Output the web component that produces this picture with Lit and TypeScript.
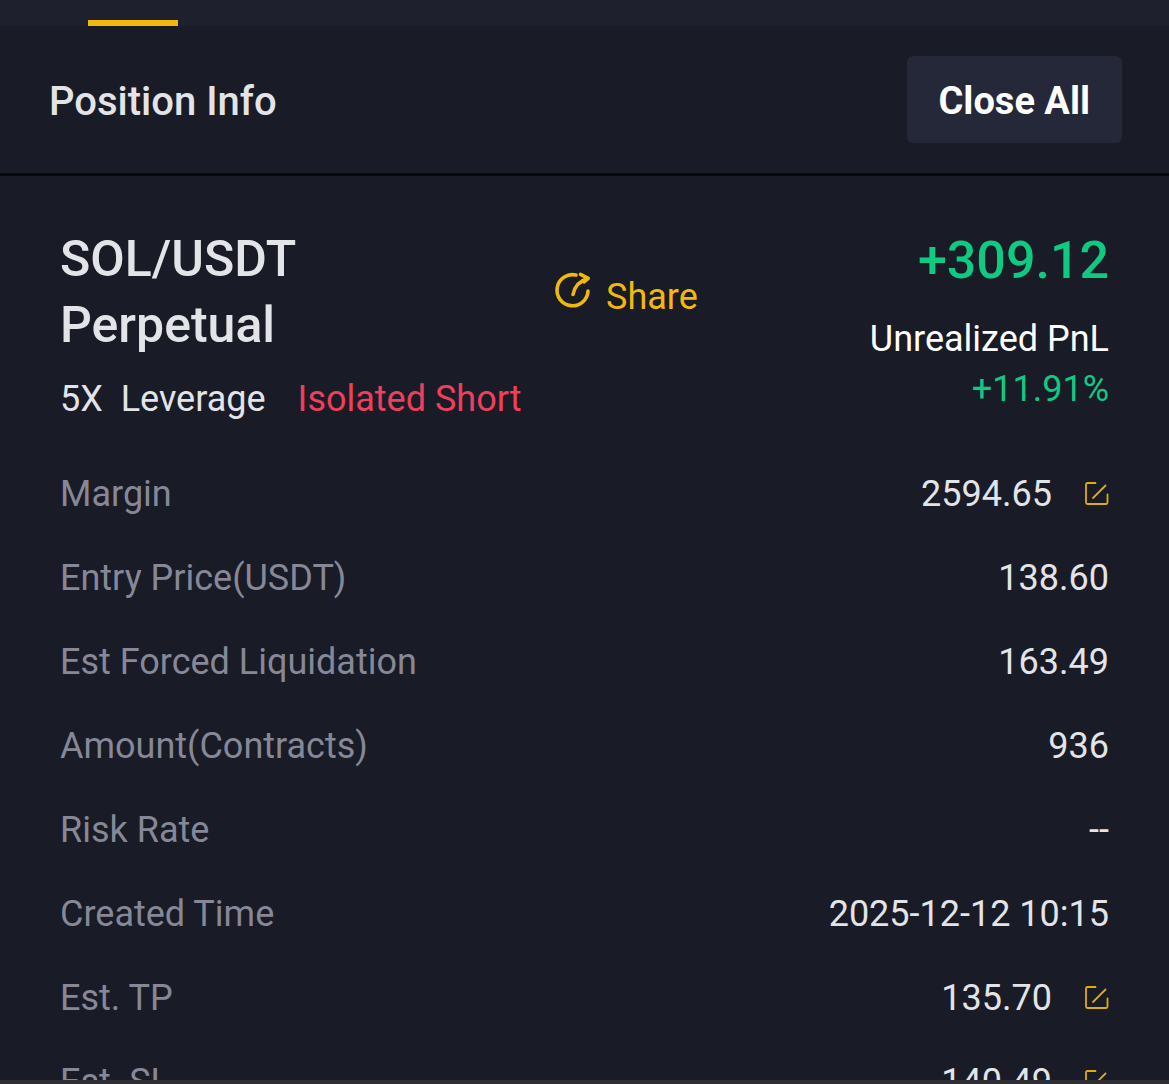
import { LitElement, html, css, svg } from "lit";
import { customElement } from "lit/decorators.js";

interface Row {
  label: string;
  value: string;
  editable?: boolean;
}

const ROWS: Row[] = [
  { label: "Margin", value: "2594.65", editable: true },
  { label: "Entry Price(USDT)", value: "138.60" },
  { label: "Est Forced Liquidation", value: "163.49" },
  { label: "Amount(Contracts)", value: "936" },
  { label: "Risk Rate", value: "--" },
  { label: "Created Time", value: "2025-12-12 10:15" },
  { label: "Est. TP", value: "135.70", editable: true },
  { label: "Est. SL", value: "140.49", editable: true },
];

const editStrokes = svg`
  <path d="M10.500 1H2.500A1.500 1.500 0 0 0 1 2.500v18A1.500 1.500 0 0 0 2.500 22h18.500A1.500 1.500 0 0 0 22.500 20.500v-8" />
  <path d="M8 16 20.500 3.500" />
`;

const shareStrokes = svg`
  <path d="M20 3.100A15.500 15.500 0 1 0 32 19" />
  <path d="M17 22.500C18.500 14.500 23.500 9 31.500 6.500" />
  <path d="M24.500 2.300 32.200 6.300 28 9.800" />
`;

@customElement("app-root")
export class AppRoot extends LitElement {
  static styles = css`
    :host {
      display: flex;
      flex-direction: column;
      height: 100vh;
      overflow: hidden;
      background: #191b26;
      color: #e3e4e8;
      font-family: Roboto, "Liberation Sans", sans-serif;
      font-size: 36px;
      line-height: 50px;
    }
    button {
      font: inherit;
      border: 0;
      margin: 0;
      padding: 0;
      background: none;
      cursor: pointer;
    }
    svg {
      display: block;
      overflow: visible;
      fill: none;
      stroke: currentColor;
      stroke-linecap: round;
      stroke-linejoin: round;
    }
    .tabs {
      flex: none;
      display: flex;
      align-items: flex-end;
      height: 26px;
      padding: 0 88px;
      background: #1e212d;
    }
    .indicator {
      width: 90px;
      height: 6px;
      background: #f0b90b;
    }
    .header {
      flex: none;
      display: flex;
      align-items: center;
      justify-content: space-between;
      padding: 30px 47px 30px 49px;
      border-bottom: 3px solid #08090d;
    }
    .heading {
      margin: 0;
      padding-top: 4px;
      font-size: 40px;
      font-weight: 500;
    }
    .close {
      padding: 20px 32px 17px;
      border-radius: 6px;
      background: #252838;
      color: #fff;
      font-size: 38px;
      font-weight: 700;
    }
    .body {
      flex: 1;
      min-height: 0;
      overflow: hidden;
      padding: 50px 60px 0;
    }
    .summary {
      display: flex;
      align-items: flex-start;
      gap: 24px;
      margin-bottom: 28px;
    }
    .pair {
      flex: none;
      width: 45%;
    }
    .name {
      width: min-content;
      margin: 0 0 16px;
      font-size: 50px;
      font-weight: 500;
      line-height: 66px;
    }
    .terms {
      display: flex;
      gap: 32px;
      white-space: pre;
    }
    .side {
      color: #ee3f5c;
    }
    .share {
      display: flex;
      align-items: flex-start;
      gap: 16px;
      padding-top: 46px;
      color: #f0b90b;
    }
    .share svg {
      stroke-width: 3.6;
    }
    .pnl {
      flex: 1;
      padding-top: 2px;
      text-align: right;
      color: #0ecb81;
    }
    .amount {
      margin-bottom: 20px;
      font-size: 52px;
      font-weight: 500;
      line-height: 66px;
    }
    .caption {
      color: #fff;
    }
    .rows {
      margin: 0;
    }
    .row {
      display: flex;
      align-items: center;
      justify-content: space-between;
      height: 84px;
    }
    .label {
      color: #868898;
    }
    .value {
      display: flex;
      align-items: center;
      gap: 33px;
      margin: 0;
    }
    .edit {
      color: #e0ac0c;
    }
    .edit svg {
      stroke-width: 1.8;
    }
    .footer {
      flex: none;
      height: 4px;
      background: #2f2f33;
    }
  `;

  render() {
    return html`
      <nav class="tabs"><div class="indicator"></div></nav>
      <header class="header">
        <h1 class="heading">Position Info</h1>
        <button class="close">Close All</button>
      </header>
      <main class="body">
        <section class="summary">
          <div class="pair">
            <h2 class="name">SOL/USDT Perpetual</h2>
            <div class="terms"><span>5X  Leverage</span><span class="side">Isolated Short</span></div>
          </div>
          <button class="share">
            <svg width="34" height="36" viewBox="0 0 34 36" aria-hidden="true">${shareStrokes}</svg>
            <span>Share</span>
          </button>
          <div class="pnl">
            <div class="amount">+309.12</div>
            <div class="caption">Unrealized PnL</div>
            <div>+11.91%</div>
          </div>
        </section>
        <dl class="rows">
          ${ROWS.map(
            (row) => html`
              <div class="row">
                <dt class="label">${row.label}</dt>
                <dd class="value">
                  <span>${row.value}</span>
                  ${row.editable
                    ? html`<button class="edit" aria-label="Edit ${row.label}">
                        <svg width="24" height="24" viewBox="0 0 24 24" aria-hidden="true">${editStrokes}</svg>
                      </button>`
                    : null}
                </dd>
              </div>
            `
          )}
        </dl>
      </main>
      <div class="footer"></div>
    `;
  }
}
